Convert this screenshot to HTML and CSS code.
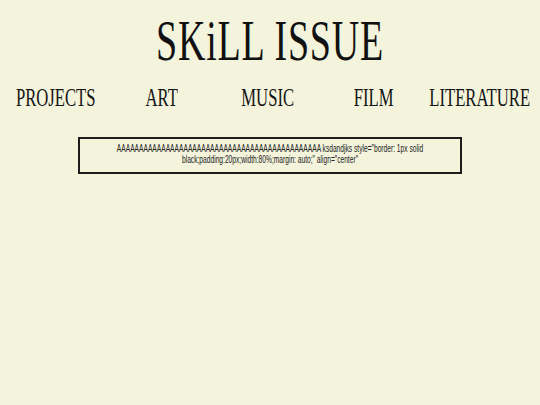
FILE: index.html
```html
<!DOCTYPE html>
<html lang="en">
<head>
<meta charset="utf-8">
<title>SKiLL ISSUE</title>
<link rel="stylesheet" href="styles.css">
</head>
<body>
<div class="page">
  <h1 class="title">SKiLL ISSUE</h1>
  <nav class="nav">
    <a class="nav-item">PROJECTS</a>
    <a class="nav-item">ART</a>
    <a class="nav-item">MUSIC</a>
    <a class="nav-item">FILM</a>
    <a class="nav-item">LITERATURE</a>
  </nav>
  <div class="box">
    <div class="box-text">AAAAAAAAAAAAAAAAAAAAAAAAAAAAAAAAAAAAAAAAAAAAAA ksdandjks style="border: 1px solid black;padding:20px;width:80%;margin: auto;" align="center"</div>
  </div>
</div>
</body>
</html>
```

FILE: styles.css
```css
html, body {
  margin: 0;
  padding: 0;
  background: #f4f4dc;
}

.page {
  width: 540px;
  height: 405px;
  padding-top: 12px;
  box-sizing: border-box;
  overflow: hidden;
}

.title {
  margin: 0;
  font-family: "Liberation Serif", "Times New Roman", serif;
  font-weight: normal;
  font-size: 38px;
  line-height: 38px;
  letter-spacing: 0.8px;
  text-align: center;
  color: #111;
  transform: scaleY(1.5);
  transform-origin: 50% 0;
}

.nav {
  display: grid;
  grid-template-columns: repeat(5, 106px);
  padding-left: 2.7px;
  margin-top: 35.6px;
}

.nav-item {
  font-family: "Liberation Serif", "Times New Roman", serif;
  font-size: 16.67px;
  line-height: 16.67px;
  text-align: center;
  color: #151515;
  text-decoration: none;
  transform: scaleY(1.5);
  transform-origin: 50% 0;
}

.box {
  width: 384px;
  box-sizing: border-box;
  margin: 34.7px auto 0;
  border: 2px solid #1c1c1c;
  padding: 4px 13.3px 14.3px;
}

.box-text {
  font-family: "Liberation Sans", Arial, sans-serif;
  font-size: 6.667px;
  line-height: 7.333px;
  text-align: center;
  color: #222;
  transform: scaleY(1.5);
  transform-origin: 50% 0;
}
```
